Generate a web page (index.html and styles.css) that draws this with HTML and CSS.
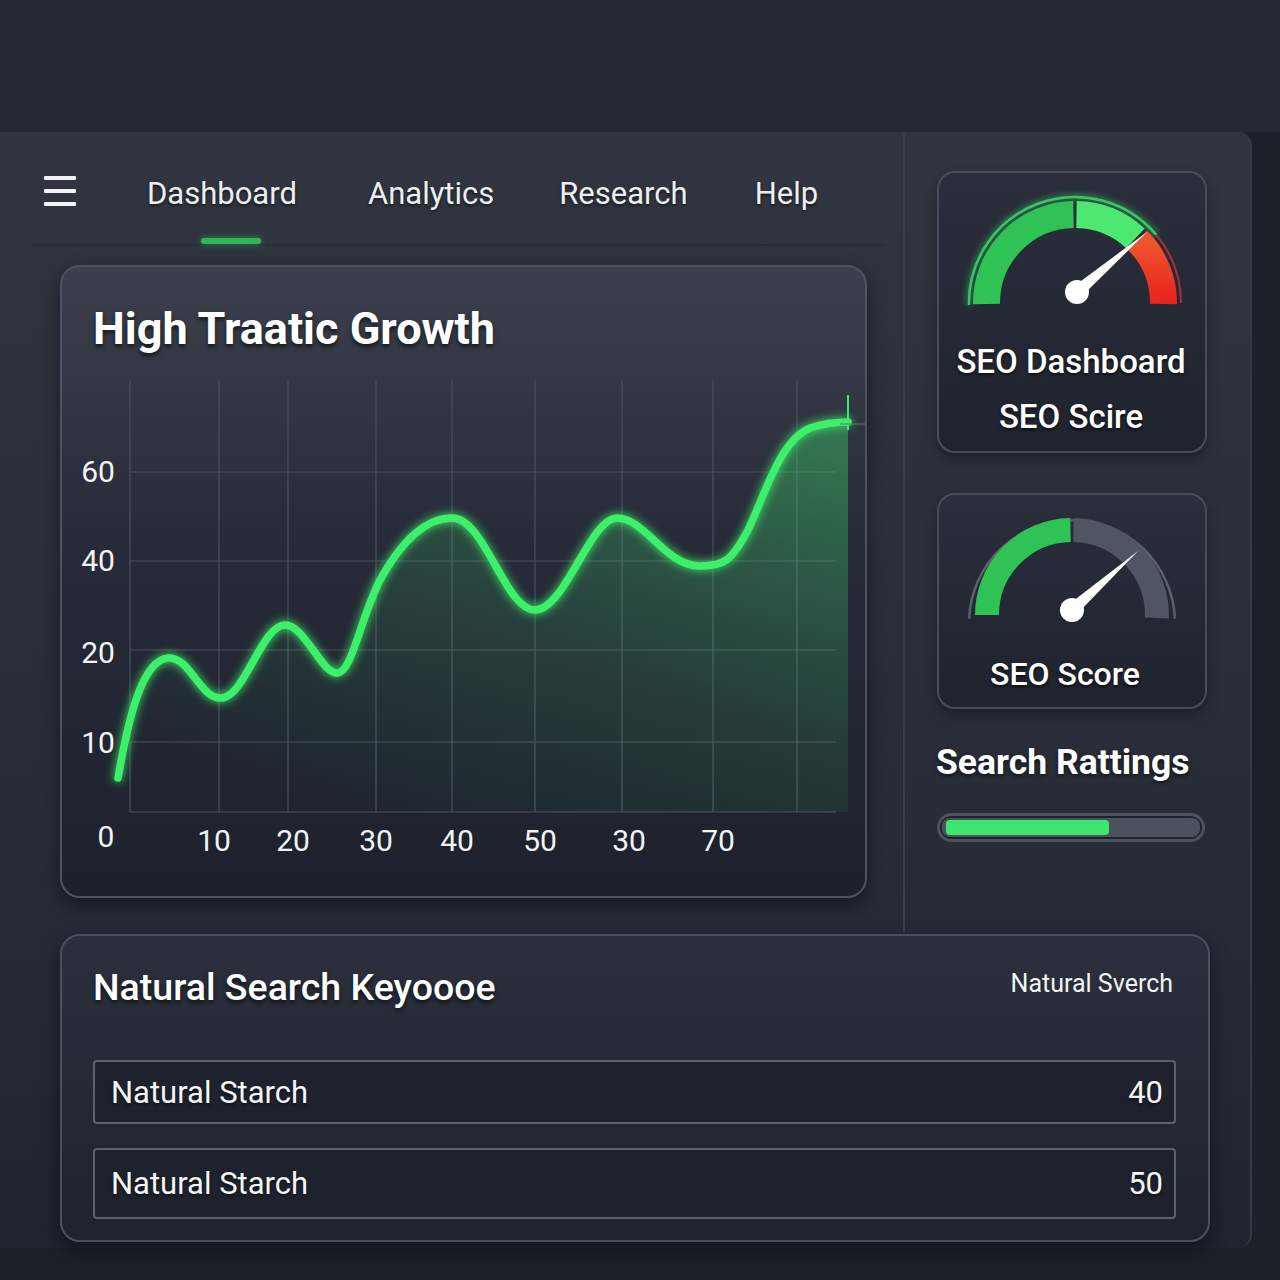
FILE: index.html
```html
<!DOCTYPE html>
<html lang="en">
<head>
    <meta charset="UTF-8">
    <meta name="viewport" content="width=device-width, initial-scale=1.0">
    <title>SEO Dashboard</title>
    <link rel="stylesheet" href="styles.css">
</head>
<body>
    <div class="top-space"></div>
    <div class="panel">
        <div class="main-col">
            <nav class="nav">
                <div class="burger"><span></span><span></span><span></span></div>
                <a class="nav-item active">Dashboard</a>
                <a class="nav-item">Analytics</a>
                <a class="nav-item">Research</a>
                <a class="nav-item">Help</a>
            </nav>

            <div class="chart-card">
                <h2 class="chart-title">High Traatic Growth</h2>
                <svg class="chart" viewBox="60 375 809 523" width="809" height="523">
                    <defs>
                        <linearGradient id="area" x1="1" y1="0" x2="0.3" y2="1">
                            <stop offset="0" stop-color="#3ee870" stop-opacity="0.38"/>
                            <stop offset="0.55" stop-color="#3ee870" stop-opacity="0.12"/>
                            <stop offset="1" stop-color="#3ee870" stop-opacity="0"/>
                        </linearGradient>
                        <filter id="glow" x="-10%" y="-10%" width="120%" height="120%">
                            <feGaussianBlur stdDeviation="5" result="b"/>
                            <feMerge><feMergeNode in="b"/><feMergeNode in="SourceGraphic"/></feMerge>
                        </filter>
                    </defs>
                    <g class="grid">
                        <line x1="130" y1="472" x2="836" y2="472"/>
                        <line x1="130" y1="561" x2="836" y2="561"/>
                        <line x1="130" y1="650" x2="836" y2="650"/>
                        <line x1="130" y1="742" x2="836" y2="742"/>
                        <line x1="130" y1="380" x2="130" y2="812"/>
                        <line x1="219" y1="380" x2="219" y2="812"/>
                        <line x1="288" y1="380" x2="288" y2="812"/>
                        <line x1="376" y1="380" x2="376" y2="812"/>
                        <line x1="452" y1="380" x2="452" y2="812"/>
                        <line x1="535" y1="380" x2="535" y2="812"/>
                        <line x1="622" y1="380" x2="622" y2="812"/>
                        <line x1="713" y1="380" x2="713" y2="812"/>
                        <line x1="797" y1="380" x2="797" y2="812"/>
                        <line x1="130" y1="812" x2="836" y2="812"/>
                    </g>
                    <path fill="url(#area)" d="M118,778 C128,720 142,660 168,658 C190,656 200,700 222,698 C245,696 262,625 285,625 C305,625 322,675 338,673 C352,671 360,620 380,580 C405,535 430,518 452,518 C485,518 505,610 535,610 C565,610 590,518 617,518 C645,518 665,566 700,566 C725,566 732,560 748,530 C765,495 780,440 810,428 C825,423 838,422 848,422 L848,812 L118,812 Z"/>
                    <path class="line" filter="url(#glow)" d="M118,778 C128,720 142,660 168,658 C190,656 200,700 222,698 C245,696 262,625 285,625 C305,625 322,675 338,673 C352,671 360,620 380,580 C405,535 430,518 452,518 C485,518 505,610 535,610 C565,610 590,518 617,518 C645,518 665,566 700,566 C725,566 732,560 748,530 C765,495 780,440 810,428 C825,423 838,422 848,422"/>
                    <line x1="848" y1="395" x2="848" y2="430" stroke="#3ee870" stroke-width="2"/>
                    <line x1="840" y1="424" x2="866" y2="424" stroke="#6a7080" stroke-width="1"/>
                    <g class="axis-label">
                        <text x="98" y="482">60</text>
                        <text x="98" y="571">40</text>
                        <text x="98" y="663">20</text>
                        <text x="98" y="753">10</text>
                        <text x="106" y="847">0</text>
                        <text x="214" y="851">10</text>
                        <text x="293" y="851">20</text>
                        <text x="376" y="851">30</text>
                        <text x="457" y="851">40</text>
                        <text x="540" y="851">50</text>
                        <text x="629" y="851">30</text>
                        <text x="718" y="851">70</text>
                    </g>
                </svg>
            </div>
        </div>

        <aside class="side-col">
            <div class="gauge-card tall">
                <svg class="gauge" viewBox="0 0 270 150" width="270" height="150">
                    <defs>
                        <linearGradient id="redseg" x1="0" y1="0" x2="0" y2="1">
                            <stop offset="0" stop-color="#f0552e"/>
                            <stop offset="1" stop-color="#e8231c"/>
                        </linearGradient>
                        <filter id="gglow" x="-20%" y="-20%" width="140%" height="140%">
                            <feGaussianBlur stdDeviation="3"/>
                        </filter>
                    </defs>
                    <path d="M32,134 A106,106 0 0 1 219.2,63.9" fill="none" stroke="#3ee870" stroke-width="4" filter="url(#gglow)" opacity="0.6"/>
                    <path d="M32,134 A106,106 0 0 1 219.2,63.9" fill="none" stroke="#36c862" stroke-width="2.5"/>
                    <path d="M219.2,63.9 A106,106 0 0 1 244,132" fill="none" stroke="#a8303a" stroke-width="2"/>
                    <path d="M49.5,133 A88.5,88.5 0 0 1 136.5,43.5" fill="none" stroke="#2fc255" stroke-width="27"/>
                    <path d="M139.5,43.5 A88.5,88.5 0 0 1 198.4,67.3" fill="none" stroke="#4de871" stroke-width="27"/>
                    <path d="M200.6,69.4 A88.5,88.5 0 0 1 226.5,133" fill="none" stroke="url(#redseg)" stroke-width="27"/>
                    <polygon points="136,116 144,126 210,61" fill="#ffffff"/>
                    <circle cx="140" cy="121" r="12" fill="#ffffff"/>
                </svg>
                <p class="gauge-label">SEO Dashboard</p>
                <p class="gauge-label">SEO Scire</p>
            </div>

            <div class="gauge-card short">
                <svg class="gauge" viewBox="0 0 270 140" width="270" height="140">
                    <path d="M32.1,125.6 A103,103 0 0 1 237.9,125.6" fill="none" stroke="#5a606c" stroke-width="2.5"/>
                    <path d="M50,122 A85,85 0 0 1 133.5,37" fill="none" stroke="#2fc255" stroke-width="24"/>
                    <path d="M136.5,37 A85,85 0 0 1 219.9,125" fill="none" stroke="#4f5562" stroke-width="24"/>
                    <polygon points="131,112 139,122 201,58" fill="#ffffff"/>
                    <circle cx="135" cy="117" r="12" fill="#ffffff"/>
                </svg>
                <p class="gauge-label">SEO Score</p>
            </div>

            <h3 class="side-title">Search Rattings</h3>
            <div class="progress">
                <div class="progress-track"><div class="progress-fill" style="width: 65%"></div></div>
            </div>
        </aside>

        <div class="keyword-card">
            <div class="keyword-head">
                <h2 class="keyword-title">Natural Search Keyoooe</h2>
                <span class="keyword-sub">Natural Sverch</span>
            </div>
            <div class="keyword-row"><span>Natural Starch</span><span>40</span></div>
            <div class="keyword-row"><span>Natural Starch</span><span>50</span></div>
        </div>
    </div>
</body>
</html>
```

FILE: styles.css
```css
body {
    margin: 0;
    background: #1c2029;
    font-family: Roboto, "Liberation Sans", sans-serif;
    color: #eef0f3;
    height: 1280px;
    overflow: hidden;
}
.top-space {
    height: 132px;
    background: #232833;
}
.panel {
    width: 1250px;
    display: grid;
    grid-template-columns: 905px 1fr;
    background: linear-gradient(#30353f, #262b36 70%, #20242f);
    border-radius: 0 14px 14px 0;
    border-right: 2px solid #343946;
    padding-bottom: 6px;
}
.main-col {
    border-right: 2px solid #393e4a;
    padding-bottom: 34px;
}
.nav {
    display: flex;
    align-items: center;
    box-sizing: border-box;
    height: 114px;
    margin: 0 17px 0 30px;
    padding: 12px 0 0 14px;
    border-bottom: 2px solid #2a2e38;
}
.burger {
    flex-shrink: 0;
    width: 32px;
    display: flex;
    flex-direction: column;
    gap: 9px;
    margin-right: 71px;
    margin-top: -6px;
}
.burger span {
    display: block;
    height: 4px;
    border-radius: 1px;
    background: #f2f3f5;
}
.nav-item {
    flex-shrink: 0;
    font-size: 31px;
    line-height: 36px;
    color: #eceef1;
    margin-right: 71px;
    position: relative;
    white-space: nowrap;
    text-shadow: 0 2px 3px rgba(0,0,0,0.5);
}
.nav-item:nth-child(3) { margin-right: 65px; }
.nav-item:nth-child(4) { margin-right: 67px; }
.nav-item:last-child { margin-right: 0; }
.nav-item.active::after {
    content: "";
    position: absolute;
    left: 54px;
    bottom: -32px;
    width: 60px;
    height: 6px;
    border-radius: 3px;
    background: #2fb556;
    box-shadow: 0 0 6px rgba(62,232,112,0.5);
}
.chart-card {
    margin: 19px 36px 0 60px;
    height: 633px;
    box-sizing: border-box;
    border: 2px solid #4d5363;
    border-radius: 20px;
    background: linear-gradient(#3b404c, #262b37 45%, #1d212c);
    box-shadow: 0 8px 20px rgba(0,0,0,0.45);
    overflow: hidden;
}
.chart-title {
    margin: 36px 0 0 31px;
    height: 52px;
    line-height: 52px;
    font-size: 45px;
    font-weight: 700;
    color: #ffffff;
    text-shadow: 0 3px 4px rgba(0,0,0,0.6);
}
.chart {
    display: block;
    margin: 20px 0 0 -2px;
}
.grid line {
    stroke: #4a5060;
    stroke-width: 1.2;
}
.line {
    fill: none;
    stroke: #3ef06a;
    stroke-width: 7.5;
    stroke-linecap: round;
}
.axis-label text {
    font-family: Roboto, "Liberation Sans", sans-serif;
    font-size: 30px;
    fill: #f2f3f5;
    text-anchor: middle;
}
.side-col {
    padding: 39px 43px 0 32px;
}
.gauge-card {
    box-sizing: border-box;
    width: 270px;
    border: 2px solid #474d5a;
    border-radius: 18px;
    background: linear-gradient(#2a2f3b, #1f232e);
    box-shadow: 0 6px 14px rgba(0,0,0,0.35);
    text-align: center;
}
.gauge-card.tall {
    height: 282px;
    margin-bottom: 40px;
}
.gauge-card.short {
    height: 216px;
}
.gauge {
    display: block;
    margin: -2px 0 0 -2px;
}
.gauge-label {
    font-size: 33px;
    font-weight: 500;
    color: #ffffff;
    margin: 0 0 0 -2px;
    text-shadow: 0 2px 3px rgba(0,0,0,0.6);
}
.tall .gauge-label {
    margin-top: 19px;
    line-height: 44px;
    height: 44px;
}
.tall .gauge-label + .gauge-label {
    margin-top: 11px;
}
.short .gauge-label {
    font-size: 32px;
    line-height: 40px;
    margin: 21px 0 0 -14px;
}
.side-title {
    margin: 32px 0 0 -1px;
    font-size: 35.5px;
    font-weight: 700;
    line-height: 42px;
    color: #ffffff;
    text-shadow: 0 2px 4px rgba(0,0,0,0.6);
}
.progress {
    box-sizing: border-box;
    width: 268px;
    height: 29px;
    margin-top: 30px;
    border: 3px solid #4c525e;
    border-radius: 15px;
    padding: 2px;
    background: #1f232d;
}
.progress-track {
    height: 100%;
    border-radius: 8px;
    background: #4b515d;
    padding: 2px 4px 2px 4px;
    box-sizing: border-box;
}
.progress-fill {
    height: 100%;
    border-radius: 4px;
    background: #3de66f;
}
.keyword-card {
    grid-column: 1 / 3;
    margin: 2px 40px 0 60px;
    height: 308px;
    box-sizing: border-box;
    border: 2px solid #4a5060;
    border-radius: 20px;
    background: linear-gradient(#2b303c, #1f232e);
    box-shadow: 0 8px 20px rgba(0,0,0,0.45);
    padding: 28px 32px 0 31px;
}
.keyword-head {
    display: flex;
    justify-content: space-between;
    align-items: flex-start;
    height: 96px;
}
.keyword-title {
    margin: 0;
    font-size: 37.5px;
    font-weight: 500;
    line-height: 46px;
    color: #ffffff;
    text-shadow: 0 3px 4px rgba(0,0,0,0.6);
}
.keyword-sub {
    font-size: 25px;
    line-height: 40px;
    margin-right: 3px;
    color: #f2f3f5;
}
.keyword-row {
    display: flex;
    justify-content: space-between;
    align-items: center;
    height: 64px;
    box-sizing: border-box;
    border: 2px solid #5b616d;
    border-radius: 4px;
    background: #1e222c;
    padding: 0 11px 0 16px;
    font-size: 31px;
    margin-bottom: 24px;
    color: #f4f5f7;
    text-shadow: 0 2px 3px rgba(0,0,0,0.5);
}
.keyword-row + .keyword-row {
    height: 71px;
}
```
